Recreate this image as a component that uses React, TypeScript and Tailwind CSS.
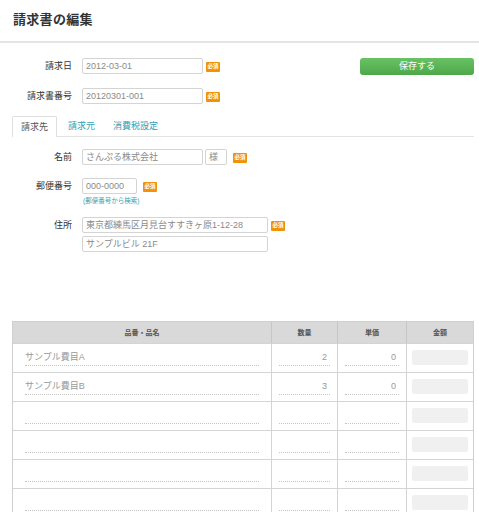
import React from "react";

const Badge = () => (
  <span className="flex items-center justify-center w-[14px] h-[10px] rounded-[1px] bg-[#f0920a] text-white text-[5.5px] leading-none font-bold">
    必須
  </span>
);

const Input = ({ value, w }: { value: string; w: string }) => (
  <div
    className={`${w} h-[16px] border border-[#d4d4d4] rounded-[2px] bg-white px-[3px] flex items-center text-[9px] text-[#8a8a8a] leading-none whitespace-nowrap overflow-hidden`}
  >
    {value}
  </div>
);

const Label = ({ children }: { children: React.ReactNode }) => (
  <div className="w-[60px] h-[16px] flex items-center justify-end text-[9px] text-[#333] leading-none">{children}</div>
);

const rows = [
  { name: "サンプル費目A", qty: "2", price: "0" },
  { name: "サンプル費目B", qty: "3", price: "0" },
  { name: "", qty: "", price: "" },
  { name: "", qty: "", price: "" },
  { name: "", qty: "", price: "" },
  { name: "", qty: "", price: "" },
];

export default function App() {
  return (
    <div
      className="w-[479px] h-[512px] overflow-hidden bg-white text-[#333] text-[10px] leading-none"
      style={{ fontFamily: '"Liberation Sans", "Noto Sans CJK JP", sans-serif' }}
    >
      <div className="h-[43px] border-b-2 border-[#e4e4e4] pl-[13px] flex items-center">
        <h1 className="text-[13px] font-bold text-[#333] tracking-[0.3px] leading-none -mt-[3px]">請求書の編集</h1>
      </div>

      <div className="pl-[12px] pr-[5px] pt-[15px]">
        <div className="flex items-start">
          <div className="flex flex-col gap-[14px]">
            <div className="flex items-center h-[16px]">
              <Label>請求日</Label>
              <div className="ml-[10px] flex"><Input value="2012-03-01" w="w-[121px]" /></div>
              <div className="ml-[3px] mt-[2px] flex"><Badge /></div>
            </div>
            <div className="flex items-center h-[16px]">
              <Label>請求書番号</Label>
              <div className="ml-[10px] flex"><Input value="20120301-001" w="w-[121px]" /></div>
              <div className="ml-[3px] mt-[2px] flex"><Badge /></div>
            </div>
          </div>
          <div className="flex-1" />
          <div className="w-[114px] h-[17px] rounded-[3px] bg-gradient-to-b from-[#68c163] to-[#4ea849] text-white text-[9px] leading-none flex items-center justify-center">
            保存する
          </div>
        </div>

        <div className="mt-[12px] flex items-end border-b border-[#e3e3e3] h-[21px]">
          <div className="h-[21px] px-[8px] border border-b-0 border-[#dedede] rounded-t-[2px] bg-white text-[9px] text-[#555] flex items-center -mb-px">請求先</div>
          <div className="h-[20px] ml-[3px] px-[8px] text-[9px] text-[#2fa0b4] flex items-center">請求元</div>
          <div className="h-[20px] ml-[2px] px-[8px] text-[9px] text-[#2fa0b4] flex items-center">消費税設定</div>
        </div>

        <div className="mt-[12px] flex items-center h-[16px]">
          <Label>名前</Label>
          <div className="ml-[10px] flex"><Input value="さんぷる株式会社" w="w-[121px]" /></div>
          <div className="ml-[2px] flex"><Input value="様" w="w-[22px]" /></div>
          <div className="ml-[6px] mt-[2px] flex"><Badge /></div>
        </div>

        <div className="mt-[13px] flex items-start">
          <Label>郵便番号</Label>
          <div className="ml-[10px] flex flex-col">
            <div className="flex items-center h-[16px]">
              <Input value="000-0000" w="w-[55px]" />
              <div className="ml-[6px] mt-[1px] flex"><Badge /></div>
            </div>
            <div className="mt-[3px] ml-[1px] text-[6.5px] text-[#3a9fb0] leading-[8px] whitespace-nowrap">(郵便番号から検索)</div>
          </div>
        </div>

        <div className="mt-[12px] flex items-start">
          <Label>住所</Label>
          <div className="ml-[10px] flex flex-col gap-[3px]">
            <div className="flex items-center h-[16px]">
              <Input value="東京都練馬区月見台すすきヶ原1-12-28" w="w-[186px]" />
              <div className="ml-[3px] mt-[2px] flex"><Badge /></div>
            </div>
            <Input value="サンプルビル 21F" w="w-[186px]" />
          </div>
        </div>

        <div className="mt-[69px] border border-[#cfcfcf]">
          <div className="grid grid-cols-[258px_66px_69px_1fr] h-[21px] bg-[#d9d9d9] text-[7px] font-bold text-[#555]">
            <div className="flex items-center justify-center">品番・品名</div>
            <div className="flex items-center justify-center border-l border-[#c6c6c6]">数量</div>
            <div className="flex items-center justify-center border-l border-[#c6c6c6]">単価</div>
            <div className="flex items-center justify-center border-l border-[#c6c6c6]">金額</div>
          </div>
          {rows.map((r, i) => (
            <div key={i} className="grid grid-cols-[258px_66px_69px_1fr] h-[29px] border-t border-[#d4d4d4] text-[9px] text-[#999]">
              <div className="px-[12px] pt-[6px]">
                <div className="h-[16px] border-b border-dotted border-[#c4c4c4] flex items-center leading-none">{r.name}</div>
              </div>
              <div className="border-l border-[#d4d4d4] px-[7px] pt-[6px]">
                <div className="h-[16px] border-b border-dotted border-[#c4c4c4] flex items-center justify-end pr-[3px] leading-none">{r.qty}</div>
              </div>
              <div className="border-l border-[#d4d4d4] px-[7px] pt-[6px]">
                <div className="h-[16px] border-b border-dotted border-[#c4c4c4] flex items-center justify-end pr-[3px] leading-none">{r.price}</div>
              </div>
              <div className="border-l border-[#d4d4d4] px-[5px] pt-[6px]">
                <div className="h-[15px] bg-[#f0f0f0] rounded-[2px]" />
              </div>
            </div>
          ))}
        </div>
      </div>
    </div>
  );
}
